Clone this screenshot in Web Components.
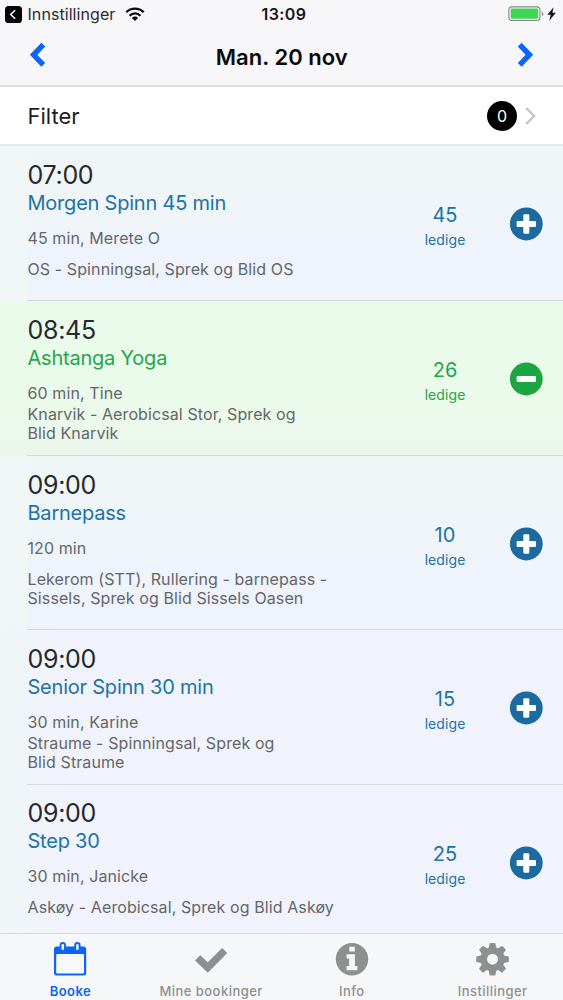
<!DOCTYPE html>
<html lang="no">
<head>
<meta charset="utf-8">
<title>Booke</title>
<style>
html, body { margin: 0; height: 100%; }
body { font-family: Inter, "Liberation Sans", sans-serif; color: #222629; background: #fff; overflow: hidden; }
</style>
</head>
<body>
<booking-app></booking-app>
<script>
const define = (name, html, setup) => {
  const template = document.createElement('template');
  template.innerHTML = html;
  customElements.define(name, class extends HTMLElement {
    constructor() {
      super();
      this.attachShadow({ mode: 'open' }).append(template.content.cloneNode(true));
    }
    connectedCallback() { if (setup) setup(this, this.shadowRoot); }
  });
};

define('status-bar', `
<style>
:host { display: grid; grid-template-columns: 1fr auto 1fr; align-items: center; height: 28px; padding: 0 6px 0 5px; box-sizing: border-box; color: #151517; }
.side { display: flex; align-items: center; }
.back { font-size: 16px; letter-spacing: .07px; margin: 0 10px 0 5px; padding-left: .5px; color: #2c2c2f; }
.clock { font-size: 16px; font-weight: 600; letter-spacing: .4px; padding-left: 6px; }
.right { justify-content: flex-end; }
svg { display: block; }
</style>
<div class="side">
  <svg width="17" height="17" viewBox="0 0 17 17"><rect width="17" height="17" rx="3.6" fill="#050505"/><path d="M10.1 4.2 5.7 8.5l4.4 4.3" fill="none" stroke="#fff" stroke-width="1.5"/></svg>
  <span class="back">Innstillinger</span>
  <svg width="20" height="15" viewBox="0 0 20 15" fill="none" stroke="#0a0a0a" stroke-width="2.3"><path d="M1.3 5.3a12.3 12.3 0 0 1 17.4 0"/><path d="M4.6 8.7a7.6 7.6 0 0 1 10.8 0"/><path d="M10 14 6.9 10.9a4.4 4.4 0 0 1 6.2 0Z" fill="#0a0a0a" stroke="none"/></svg>
</div>
<span class="clock">13:09</span>
<div class="side right">
  <svg width="49" height="16" viewBox="0 0 49 16"><rect x=".9" y=".9" width="31" height="13.6" rx="3" fill="#f8fff8" stroke="#858887" stroke-width="1.1"/><rect x="2.7" y="2.6" width="27.4" height="10.1" rx="1.2" fill="#3dd551"/><path d="M33.8 5.6q1.7.6 1.7 2.3t-1.7 2.3z" fill="#929598"/><path d="m45.6 1.2-6.2 7.6h3.3l-1.5 5.9 6.6-7.9h-3.4z" fill="#111"/></svg>
</div>`);

define('day-header', `
<style>
:host { display: flex; align-items: center; justify-content: space-between; height: 59px; padding: 0 28.5px 4px 29px; box-sizing: border-box; border-bottom: 2px solid #dfdfe1; }
h1 { margin: 5px 0 0; font-size: 22px; line-height: 28px; font-weight: 600; letter-spacing: .05px; color: #0b0b0c; }
svg { display: block; fill: none; stroke: #0d65f5; stroke-width: 5.4; }
</style>
<svg width="18" height="26" viewBox="0 0 18 26"><path d="M14.3 2.7 4.6 12.8l9.7 10"/></svg>
<h1><slot></slot></h1>
<svg width="18" height="26" viewBox="0 0 18 26"><path d="M3.7 2.7 13.4 12.8l-9.7 10"/></svg>`);

define('filter-row', `
<style>
:host { display: flex; align-items: center; height: 59px; padding: 0 27px; box-sizing: border-box; background: #fff; border-bottom: 2px solid #e7e9ea; font-size: 22px; color: #1e1e20; }
.label { flex: 1; padding-left: .5px; }
.badge { display: grid; place-items: center; width: 30px; height: 30px; border-radius: 50%; background: #000; color: #fff; font-size: 16px; }
svg { margin: 1px 0 0 8px; }
</style>
<span class="label"><slot></slot></span>
<span class="badge">0</span>
<svg width="11" height="18" viewBox="0 0 11 18"><path d="M1.2 1 9.2 9l-8 8" fill="none" stroke="#c2c2c5" stroke-width="2.2"/></svg>`);

define('session-row', `
<style>
:host { --accent: #2073a5; --disc: #1c6ba0; display: flex; box-sizing: border-box; height: var(--h, 155px); padding-left: 27px; background: linear-gradient(90deg, #f0f7f6 27px, transparent 27px), linear-gradient(#eff6f6, #eff5f9 52%, #eff3fb 62%); }
:host([flat]) { background: linear-gradient(90deg, #f0f7f6, #f0f5fa 27px, #f0f3fb 60px); }
:host([booked]) { --accent: #25a64c; --disc: #1ba642; background: linear-gradient(#e9fbec, #ebfaea 62%, #ecf6ec); }
.body { display: flex; flex: 1; align-items: center; border-bottom: 1px solid #d3dade; }
:host([last]) .body { border-bottom-color: transparent; }
.text { flex: 1; align-self: flex-start; padding: 14px 0 0 .5px; }
:host([last]) .text { padding-top: 13px; }
.time { font-size: 25px; line-height: 30px; letter-spacing: -.3px; color: #26292b; }
.name { font-size: 20px; line-height: 26px; color: var(--accent); letter-spacing: -.22px; }
.meta { margin-top: 12px; font-size: 16px; line-height: 21px; color: #646769; letter-spacing: .1px; }
.place { margin-top: var(--gap, 11px); font-size: 16px; line-height: 19px; color: #646769; letter-spacing: .1px; white-space: pre-line; }
.free { width: 60px; text-align: center; color: var(--accent); margin-right: 34px; padding-top: 8px; }
.count { font-size: 20px; line-height: 25px; }
.unit { font-size: 14px; line-height: 23px; letter-spacing: .08px; }
svg { display: block; margin: 2px 20px 0 0; }
:host([booked]) .v { display: none; }
</style>
<div class="body">
  <div class="text">
    <div class="time"></div><div class="name"></div><div class="meta"></div><div class="place"></div>
  </div>
  <div class="free"><div class="count"></div><div class="unit">ledige</div></div>
  <svg width="34" height="34" viewBox="0 0 34 34"><circle cx="17.3" cy="17" r="16.4" fill="var(--disc)"/><rect x="7.6" y="14" width="19.4" height="6" rx="1.1" fill="#fff"/><rect class="v" x="14.3" y="7.3" width="6" height="19.4" rx="1.1" fill="#fff"/></svg>
</div>`, (host, root) => {
  for (const key of ['time', 'name', 'meta', 'place', 'count'])
    root.querySelector('.' + key).textContent = host.getAttribute(key).replace('|', '\n');
});

define('tab-item', `
<style>
:host { display: flex; flex-direction: column; align-items: center; flex: 1 1 0; padding-top: 7px; color: #8e9090; font-size: 13px; font-weight: 500; letter-spacing: .46px; white-space: nowrap; }
:host([active]) { color: #0d65f5; font-weight: 600; }
.label { line-height: 18px; margin-top: 4.5px; }
::slotted(svg) { display: block; }
</style>
<slot name="icon"></slot><span class="label"><slot></slot></span>`);

define('tab-bar', `
<style>
:host { display: flex; height: 67px; box-sizing: border-box; border-top: 1px solid #d5d7dc; background: #f6f7f8; }
</style><slot></slot>`);

define('booking-app', `
<style>
:host { display: flex; flex-direction: column; width: 563px; height: 1000px; overflow: hidden; }
.top { background: #f7f6f9; }
main { flex: 1; overflow: hidden; }
</style>
<div class="top"><status-bar></status-bar><day-header>Man. 20 nov</day-header></div>
<filter-row>Filter</filter-row>
<main>
  <session-row time="07:00" name="Morgen Spinn 45 min" meta="45 min, Merete O" place="OS - Spinningsal, Sprek og Blid OS" count="45"></session-row>
  <session-row booked style="--gap:1px" time="08:45" name="Ashtanga Yoga" meta="60 min, Tine" place="Knarvik - Aerobicsal Stor, Sprek og|Blid Knarvik" count="26"></session-row>
  <session-row style="--h:174px" time="09:00" name="Barnepass" meta="120 min" place="Lekerom (STT), Rullering - barnepass -|Sissels, Sprek og Blid Sissels Oasen" count="10"></session-row>
  <session-row flat style="--gap:1px" time="09:00" name="Senior Spinn 30 min" meta="30 min, Karine" place="Straume - Spinningsal, Sprek og|Blid Straume" count="15"></session-row>
  <session-row flat last time="09:00" name="Step 30" meta="30 min, Janicke" place="Askøy - Aerobicsal, Sprek og Blid Askøy" count="25"></session-row>
</main>
<tab-bar>
  <tab-item active>
    <svg slot="icon" width="34" height="36" viewBox="0 0 34 36"><path d="M3.5 5.5h27Q33.2 5.5 33.2 8V32q0 2.5-2.5 2.5h-27Q1 34.5 1 32V8Q1 5.5 3.5 5.5Z" fill="#0d65f5"/><rect x="3.2" y="13" width="27.8" height="19.4" rx=".8" fill="#f8f8fb"/><g fill="#f6f7f8" stroke="#0d65f5" stroke-width="1.9"><rect x="7.6" y="2" width="4.4" height="8" rx="2.2"/><rect x="22.2" y="2" width="4.4" height="8" rx="2.2"/></g></svg>Booke</tab-item>
  <tab-item>
    <svg slot="icon" width="34" height="36" viewBox="0 0 34 36"><path d="m1 19.5 5.3-5.2 7.5 7L28.1 7 33.3 12.1 13.8 31.8Z" fill="#8e9090"/></svg>Mine bookinger</tab-item>
  <tab-item>
    <svg slot="icon" width="34" height="36" viewBox="0 0 34 36"><circle cx="17" cy="18.3" r="16.2" fill="#8e9090"/><path d="M14.3 5.8h5.5v4.8h-5.5zM11.6 13.3h8.3v11.8h2.4v4.2H11.6v-4.2h2.5v-7.6h-2.5z" fill="#f6f7f8"/></svg>Info</tab-item>
  <tab-item>
    <svg slot="icon" width="34" height="36" viewBox="0 0 34 36"><g transform="translate(16.5 18.2)" fill="#8e9090"><path id="t" d="M-4-10-2.8-16.3h5.6L4-10z"/><use href="#t" transform="rotate(45)"/><use href="#t" transform="rotate(90)"/><use href="#t" transform="rotate(135)"/><use href="#t" transform="rotate(180)"/><use href="#t" transform="rotate(225)"/><use href="#t" transform="rotate(270)"/><use href="#t" transform="rotate(315)"/><circle r="8.8" fill="none" stroke="#8e9090" stroke-width="6.6"/></g></svg>Instillinger</tab-item>
</tab-bar>`);
</script>
</body>
</html>
